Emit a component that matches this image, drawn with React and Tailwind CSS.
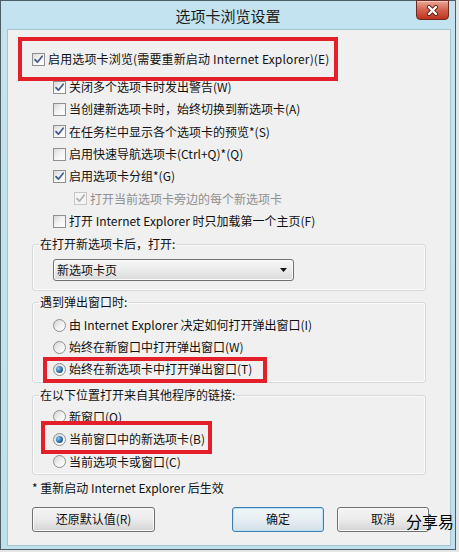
import React from 'react';

function CheckBox({ checked, disabled }) {
	return (
		<span
			className={
				disabled
					? 'flex h-[13px] w-[13px] shrink-0 items-center justify-center border border-[#c6c6c6] bg-[#f4f4f4]'
					: 'flex h-[13px] w-[13px] shrink-0 items-center justify-center border border-[#8e8f8f] bg-gradient-to-br from-[#d9d9d9] via-[#f4f4f4] to-white'
			}
		>
			{checked && (
				<svg width="11" height="11" viewBox="0 0 11 11">
					<path
						d="M2 5.6 L4.4 8.2 L9.2 2.2"
						fill="none"
						stroke={disabled ? '#b0b0b0' : '#3f5b8f'}
						strokeWidth="1.7"
						strokeLinecap="round"
						strokeLinejoin="round"
					/>
				</svg>
			)}
		</span>
	);
}

function Radio({ checked }) {
	return (
		<span className="flex h-[13px] w-[13px] shrink-0 items-center justify-center rounded-full border border-[#8e8f8f] bg-gradient-to-br from-[#d4d4d4] via-[#f0f0f0] to-white">
			{checked && (
				<span className="h-[7px] w-[7px] rounded-full bg-[radial-gradient(circle_at_35%_35%,#8cc6ee,#2b6ea6_55%,#123c66)]" />
			)}
		</span>
	);
}

function CheckRow({ label, checked, disabled, indent = 'ml-[45px]' }) {
	return (
		<div className={`${indent} flex h-[22.33px] items-center gap-[3px]`}>
			<CheckBox checked={checked} disabled={disabled} />
			<span className={disabled ? 'text-[#8f8f8f]' : 'text-[#111]'}>{label}</span>
		</div>
	);
}

function RadioRow({ label, checked, h = 'h-[22px]', mark }) {
	return (
		<div className={`relative flex ${h} items-center gap-[3px]`}>
			<Radio checked={checked} />
			<span className="text-[#111]">{label}</span>
			{mark}
		</div>
	);
}

function Group({ title, className, children }) {
	return (
		<fieldset className={`rounded-[3px] border border-[#d5d9dc] p-0 shadow-[inset_0_0_0_1px_#fbfbfb] ${className}`}>
			<legend className="ml-[6px] px-[1px] leading-[16px] text-[#111]">{title}</legend>
			{children}
		</fieldset>
	);
}

function Button({ children, primary, className }) {
	return (
		<button
			className={
				primary
					? `flex h-[25px] items-center justify-center rounded-[3px] border border-[#3c7fb1] bg-gradient-to-b from-[#f1f6f9] via-[#e6eef3] to-[#d3dfe7] shadow-[inset_0_0_0_1px_#b9e0f6] text-[#111] ${className}`
					: `flex h-[25px] items-center justify-center rounded-[3px] border border-[#707070] bg-gradient-to-b from-[#f4f4f4] via-[#ebebeb] to-[#d4d4d4] shadow-[inset_0_0_0_1px_#fafafa] text-[#111] ${className}`
			}
		>
			{children}
		</button>
	);
}

export default function App() {
	return (
		<div className="h-[552px] w-[459px] bg-[#e4e6e7] font-['Noto_Sans_CJK_SC','Noto_Sans',sans-serif] text-[12px] leading-[16px]">
			<div className="relative flex h-[550px] w-[456px] flex-col border border-[#4f5d66] bg-gradient-to-b from-[#c3e3f0] to-[#bfe0ed]">
				{/* title bar */}
				<div className="flex h-[29px] items-center justify-center text-[15px] text-[#1c1c1c]">选项卡浏览设置</div>
				<div className="absolute right-[6px] top-[-1px] flex h-[20px] w-[33px] items-center justify-center rounded-b-[4px] border border-[#6b2a22] bg-gradient-to-b from-[#eaa696] via-[#d2614f] to-[#c0321c] shadow-[inset_0_1px_0_#f4c7bc]">
					<svg width="13" height="11" viewBox="0 0 13 11">
						<path d="M3 2 L10 9 M10 2 L3 9" stroke="#5a1c14" strokeWidth="4" strokeLinecap="round" />
						<path d="M3 2 L10 9 M10 2 L3 9" stroke="#ffffff" strokeWidth="2.4" strokeLinecap="round" />
					</svg>
				</div>

				{/* client area */}
				<div className="ml-[7px] flex h-[515px] w-[442px] flex-col bg-[#f0f0f0] pt-[18px] shadow-[0_0_0_1px_#a7c3d0]">
					<div className="relative ml-[24px] mb-[6px] flex h-[22px] items-center gap-[3px]">
						<CheckBox checked />
						<span className="tracking-[0.15px] text-[#111]">启用选项卡浏览(需要重新启动 Internet Explorer)(E)</span>
						<div className="absolute left-[-14px] top-[-11px] z-10 h-[44px] w-[320px] border-4 border-[#e3202a]" />
					</div>
					<CheckRow checked label="关闭多个选项卡时发出警告(W)" />
					<CheckRow label="当创建新选项卡时，始终切换到新选项卡(A)" />
					<CheckRow checked label="在任务栏中显示各个选项卡的预览*(S)" />
					<CheckRow label="启用快速导航选项卡(Ctrl+Q)*(Q)" />
					<CheckRow checked label="启用选项卡分组*(G)" />
					<CheckRow checked disabled indent="ml-[66px]" label="打开当前选项卡旁边的每个新选项卡" />
					<CheckRow label="打开 Internet Explorer 时只加载第一个主页(F)" />

					<div className="mx-[24px] flex flex-col">
						<Group title="在打开新选项卡后，打开:" className="mt-[4px]">
							<div className="pb-[9px] pl-[20px] pt-[7px]">
								<div className="flex h-[22px] w-[241px] items-center justify-between rounded-[3px] border border-[#707070] bg-gradient-to-b from-[#f6f6f6] via-[#ebebeb] to-[#dadada] pl-[3px] pr-[6px] shadow-[inset_0_0_0_1px_#fbfbfb]">
									<span className="text-[#111]">新选项卡页</span>
									<svg width="7" height="4" viewBox="0 0 7 4">
										<path d="M0 0 L7 0 L3.5 4 Z" fill="#111" />
									</svg>
								</div>
							</div>
						</Group>

						<Group title="遇到弹出窗口时:" className="mt-[3px]">
							<div className="pb-[2px] pl-[20px] pt-[4px]">
								<RadioRow label="由 Internet Explorer 决定如何打开弹出窗口(I)" />
								<RadioRow label="始终在新窗口中打开弹出窗口(W)" />
								<RadioRow
									checked
									label="始终在新选项卡中打开弹出窗口(T)"
									mark={<div className="absolute left-[-10px] top-[-1px] z-10 h-[26px] w-[224px] border-4 border-[#e3202a]" />}
								/>
							</div>
						</Group>

						<Group title="在以下位置打开来自其他程序的链接:" className="mt-[4px]">
							<div className="pb-[1px] pl-[20px] pt-[2px]">
								<RadioRow h="h-[22.5px]" label="新窗口(O)" />
								<RadioRow
									h="h-[22.5px]"
									checked
									label="当前窗口中的新选项卡(B)"
									mark={<div className="absolute left-[-12px] top-[-7px] z-10 h-[33px] w-[171px] border-4 border-[#e3202a]" />}
								/>
								<RadioRow h="h-[22.5px]" label="当前选项卡或窗口(C)" />
							</div>
						</Group>
					</div>

					<div className="ml-[24px] mt-[5px] text-[#111]">* 重新启动 Internet Explorer 后生效</div>

					<div className="relative ml-[24px] mt-[11px] flex">
						<Button className="w-[123px]">还原默认值(R)</Button>
						<Button primary className="ml-[77px] w-[92px]">确定</Button>
						<Button className="ml-[13px] w-[92px]">取消</Button>
						<span className="absolute left-[374px] top-[4px] z-10 whitespace-nowrap text-[16px] leading-[20px] text-black">分享易</span>
					</div>
				</div>
			</div>
		</div>
	);
}
